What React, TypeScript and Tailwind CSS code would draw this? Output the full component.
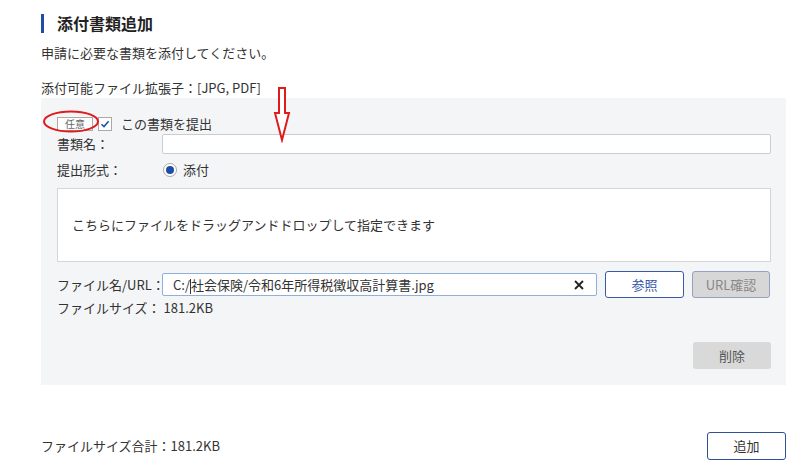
import React from 'react';

// 添付書類追加フォーム
export default function App() {
  return (
    <div
      className="relative w-[800px] h-[465px] bg-white text-[#333] text-[13px] overflow-hidden"
      style={{ fontFamily: '"Noto Sans CJK JP", "Noto Sans", sans-serif' }}
    >
      <div className="pl-[41px] w-[786px] pt-[13px]">
        {/* 見出し */}
        <div className="flex items-center h-[20px]">
          <div className="w-[3px] h-[19px] bg-[#1d4ea6]" />
          <h2 className="ml-[13px] text-[16px] font-bold leading-[20px] text-[#222]">添付書類追加</h2>
        </div>
        <p className="mt-[10px] leading-[20px]">申請に必要な書類を添付してください。</p>
        <p className="mt-[15px] leading-[20px]">添付可能ファイル拡張子：[JPG, PDF]</p>

        {/* 書類パネル */}
        <div className="bg-[#f4f5f7] pl-[16px] pr-[15px] pt-[16px] pb-[16px]">
          <div className="flex items-center h-[20px]">
            <span className="w-[36px] h-[14px] border border-[#aaa] bg-white text-[10px] leading-[12px] text-[#666] flex items-center justify-center">
              任意
            </span>
            <span className="ml-[5px] w-[14px] h-[14px] border border-[#aaa] bg-white flex items-center justify-center">
              <svg width="10" height="10" viewBox="0 0 10 10">
                <path d="M1.5 5.2 L4 7.6 L8.6 2.2" fill="none" stroke="#1d4ea6" strokeWidth="1.5" />
              </svg>
            </span>
            <span className="ml-[9px] leading-[20px]">この書類を提出</span>
          </div>

          <div className="flex items-center h-[20px]">
            <span className="w-[105px] leading-[20px]">書類名：</span>
            <div className="flex-1 h-[20px] bg-white border border-[#ccc] rounded-[2px]" />
          </div>

          <div className="flex items-center h-[20px] mt-[6px]">
            <span className="w-[106px] leading-[20px]">提出形式：</span>
            <span className="w-[14px] h-[14px] rounded-full bg-white border border-[#aaa] flex items-center justify-center">
              <span className="w-[8px] h-[8px] rounded-full bg-[#1d4ea6]" />
            </span>
            <span className="ml-[6px]">添付</span>
          </div>

          <div className="mt-[8px] h-[74px] bg-white border border-[#d4d6da] flex items-center pl-[14px]">
            こちらにファイルをドラッグアンドドロップして指定できます
          </div>

          <div className="mt-[9px] flex items-center h-[27px]">
            <span className="w-[105px] leading-[20px] whitespace-nowrap">ファイル名/URL：</span>
            <div className="w-[435px] h-[23px] bg-white border border-[#8fb0db] rounded-[2px] flex items-center pl-[10px] pr-[12px]">
              <span className="flex-1">
                C:/<span className="inline-block w-px h-[15px] bg-[#333] align-middle" />社会保険/令和6年所得税徴収高計算書.jpg
              </span>
              <svg width="10" height="10" viewBox="0 0 10 10">
                <path d="M1 1 L9 9 M9 1 L1 9" stroke="#222" strokeWidth="1.8" />
              </svg>
            </div>
            <button className="ml-[8px] w-[79px] h-[27px] bg-white border border-[#3a5aa8] rounded-[3px] text-[#3556a8]">
              参照
            </button>
            <button className="ml-[8px] w-[78px] h-[27px] bg-[#d7d7d7] border border-[#95a1c2] rounded-[3px] text-[#888]">
              URL確認
            </button>
          </div>

          <p className="leading-[20px]">ファイルサイズ： 181.2KB</p>

          <div className="mt-[24px] flex justify-end">
            <button className="w-[78px] h-[27px] bg-[#d9d9d9] rounded-[3px] text-[#555]">削除</button>
          </div>
        </div>

        {/* 合計 */}
        <div className="mt-[47px] flex items-center justify-between h-[28px]">
          <span>ファイルサイズ合計：181.2KB</span>
          <button className="w-[79px] h-[28px] bg-white border border-[#2f4f9a] rounded-[3px] text-[#333]">追加</button>
        </div>
      </div>

      {/* 注記：赤丸と矢印 */}
      <svg className="absolute left-[42px] top-[110px]" width="60" height="24" viewBox="0 0 60 24">
        <ellipse cx="29" cy="11.5" rx="27" ry="10" fill="none" stroke="#e01b1b" strokeWidth="2" />
      </svg>
      <svg className="absolute left-[273px] top-[85px]" width="20" height="58" viewBox="0 0 20 58">
        <path
          d="M6 3 L12 3 L12 28 L16 28 L9 55 L2 28 L6 28 Z"
          fill="white"
          stroke="#e01b1b"
          strokeWidth="2"
          strokeLinejoin="miter"
        />
      </svg>
    </div>
  );
}
